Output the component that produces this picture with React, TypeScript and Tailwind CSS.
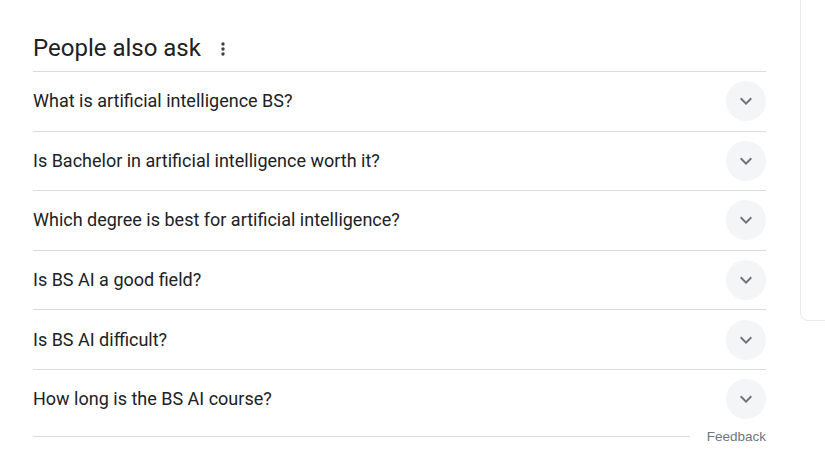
import React from "react";

const questions = [
  "What is artificial intelligence BS?",
  "Is Bachelor in artificial intelligence worth it?",
  "Which degree is best for artificial intelligence?",
  "Is BS AI a good field?",
  "Is BS AI difficult?",
  "How long is the BS AI course?",
];

function Chevron() {
  return (
    <svg width="24" height="24" viewBox="0 0 24 24" fill="#70757a">
      <path d="M16.59 8.59L12 13.17 7.41 8.59 6 10l6 6 6-6z" />
    </svg>
  );
}

export default function App() {
  return (
    <div
      className="flex w-[825px] h-[464px] bg-white overflow-hidden"
      style={{ fontFamily: "Roboto, Arial, sans-serif" }}
    >
      <div className="ml-[33px] w-[733px] shrink-0">
        <div className="pt-[34px] pb-[8px] flex items-center h-[71px]">
          <span className="text-[24px] leading-[29px] text-[#202124]">People also ask</span>
          <svg className="ml-[19px]" width="6" height="16" viewBox="0 0 6 16" fill="#3c4043">
            <circle cx="3" cy="3" r="1.7" />
            <circle cx="3" cy="8" r="1.7" />
            <circle cx="3" cy="13" r="1.7" />
          </svg>
        </div>
        {questions.map((q) => (
          <div
            key={q}
            className="h-[59.6px] border-t border-[#dadce0] flex items-center justify-between"
          >
            <span className="text-[18px] leading-[24px] text-[#202124]">{q}</span>
            <div className="w-[40px] h-[40px] rounded-full bg-[#f4f5f6] flex items-center justify-center">
              <Chevron />
            </div>
          </div>
        ))}
        <div className="h-[16px] flex items-center">
          <div className="flex-1 h-px bg-[#dadce0]" />
          <span
            className="ml-[17px] text-[13.5px] leading-[16px] text-[#70757a]"
            style={{ fontFamily: "Arial, 'Liberation Sans', sans-serif" }}
          >
            Feedback
          </span>
        </div>
      </div>
      <div className="ml-[34px] flex-1 h-[321px] border-l border-b border-[#ececec] rounded-bl-[8px]" />
    </div>
  );
}
